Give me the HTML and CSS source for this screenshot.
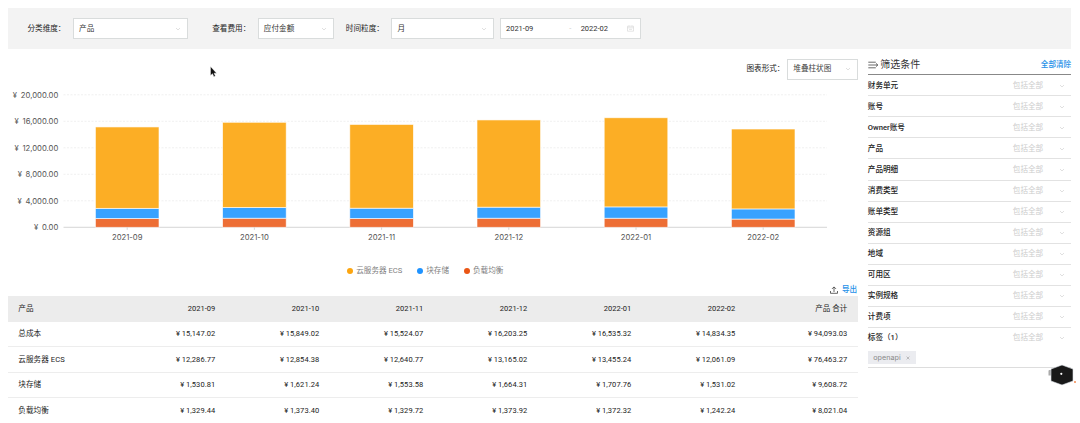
FILE: index.html
```
<!DOCTYPE html>
<html lang="zh-CN">
<head>
<meta charset="utf-8">
<title>费用分析</title>
<link rel="stylesheet" href="styles.css">
</head>
<body>
<svg class="defs" width="0" height="0">
  <symbol id="chev" viewBox="0 0 6 6"><path d="M1 2l2 2 2-2" fill="none" stroke="currentColor" stroke-width=".7"/></symbol>
</svg>
<header class="toolbar">
  <span class="label">分类维度：</span>
  <div class="select dimension"><span>产品</span><svg class="chev"><use href="#chev"/></svg></div>
  <span class="label label-cost">查看费用：</span>
  <div class="select cost"><span>应付金额</span><svg class="chev"><use href="#chev"/></svg></div>
  <span class="label label-time">时间粒度：</span>
  <div class="select period"><span>月</span><svg class="chev"><use href="#chev"/></svg></div>
  <div class="select range"><span>2021-09</span><i>-</i><span class="range-end">2022-02</span>
    <svg class="calendar" viewBox="0 0 7 7"><path d="M.5 1.2h6v5h-6zM.5 2.8h6M2 .5v1M5 .5v1M2 4.4h3" fill="none" stroke="currentColor" stroke-width=".6"/></svg></div>
</header>
<div class="content">
  <main class="main">
    <div class="chart-type"><span class="label">图表形式：</span>
      <div class="select type"><span>堆叠柱状图</span><svg class="chev"><use href="#chev"/></svg></div></div>
    <svg class="chart" id="chart" viewBox="8 84 850 166"></svg>
    <div class="legend">
      <span><b class="dot ecs"></b>云服务器 ECS</span><span><b class="dot disk"></b>块存储</span><span><b class="dot slb"></b>负载均衡</span>
    </div>
    <div class="export">
      <svg viewBox="0 0 8 8"><path d="M4 6V1M2 2.9L4 .9l2 2M.5 5v2.3h7V5" fill="none" stroke="#333" stroke-width=".75"/></svg>
      <a>导出</a>
    </div>
    <table class="table">
      <colgroup><col class="c-name"><col class="c-first"><col><col><col><col><col><col class="c-total"></colgroup>
      <thead><tr><th>产品</th><th>2021-09</th><th>2021-10</th><th>2021-11</th><th>2021-12</th><th>2022-01</th><th>2022-02</th><th>产品 合计</th></tr></thead>
      <tbody>
        <tr><td>总成本</td><td>¥ 15,147.02</td><td>¥ 15,849.02</td><td>¥ 15,524.07</td><td>¥ 16,203.25</td><td>¥ 16,535.32</td><td>¥ 14,834.35</td><td>¥ 94,093.03</td></tr>
        <tr><td>云服务器 ECS</td><td>¥ 12,286.77</td><td>¥ 12,854.38</td><td>¥ 12,640.77</td><td>¥ 13,165.02</td><td>¥ 13,455.24</td><td>¥ 12,061.09</td><td>¥ 76,463.27</td></tr>
        <tr><td>块存储</td><td>¥ 1,530.81</td><td>¥ 1,621.24</td><td>¥ 1,553.58</td><td>¥ 1,664.31</td><td>¥ 1,707.76</td><td>¥ 1,531.02</td><td>¥ 9,608.72</td></tr>
        <tr><td>负载均衡</td><td>¥ 1,329.44</td><td>¥ 1,373.40</td><td>¥ 1,329.72</td><td>¥ 1,373.92</td><td>¥ 1,372.32</td><td>¥ 1,242.24</td><td>¥ 8,021.04</td></tr>
      </tbody>
    </table>
  </main>
  <aside class="filters">
    <div class="filters-head">
      <svg viewBox="0 0 11 8"><path d="M.3 1.2h7.5M.3 4h9.5M.3 6.8h7.5M8 2.4L9.8 4 8 5.6" fill="none" stroke="#444" stroke-width=".8"/></svg>
      <h2>筛选条件</h2><a>全部清除</a>
    </div>
    <div class="filter-row"><span>财务单元</span><em>包括全部</em><svg class="chev"><use href="#chev"/></svg></div>
    <div class="filter-row"><span>账号</span><em>包括全部</em><svg class="chev"><use href="#chev"/></svg></div>
    <div class="filter-row"><span>Owner账号</span><em>包括全部</em><svg class="chev"><use href="#chev"/></svg></div>
    <div class="filter-row"><span>产品</span><em>包括全部</em><svg class="chev"><use href="#chev"/></svg></div>
    <div class="filter-row"><span>产品明细</span><em>包括全部</em><svg class="chev"><use href="#chev"/></svg></div>
    <div class="filter-row"><span>消费类型</span><em>包括全部</em><svg class="chev"><use href="#chev"/></svg></div>
    <div class="filter-row"><span>账单类型</span><em>包括全部</em><svg class="chev"><use href="#chev"/></svg></div>
    <div class="filter-row"><span>资源组</span><em>包括全部</em><svg class="chev"><use href="#chev"/></svg></div>
    <div class="filter-row"><span>地域</span><em>包括全部</em><svg class="chev"><use href="#chev"/></svg></div>
    <div class="filter-row"><span>可用区</span><em>包括全部</em><svg class="chev"><use href="#chev"/></svg></div>
    <div class="filter-row"><span>实例规格</span><em>包括全部</em><svg class="chev"><use href="#chev"/></svg></div>
    <div class="filter-row"><span>计费项</span><em>包括全部</em><svg class="chev"><use href="#chev"/></svg></div>
    <div class="filter-row open"><span>标签（1）</span><em>包括全部</em><svg class="chev"><use href="#chev"/></svg></div>
    <div class="tags"><span class="tag">openapi <svg viewBox="0 0 4 4"><path d="M.6.6l2.8 2.8M3.4.6L.6 3.4" stroke="#888" stroke-width=".5"/></svg></span></div>
  </aside>
</div>
<svg class="cursor" viewBox="0 0 7 12"><path d="M.5.5v9l2-1.8 1.4 3 1.5-.7L4 7.2h2.6z" fill="#111" stroke="#fff" stroke-width=".4"/></svg>
<svg class="assistant" viewBox="0 0 30 22"><path d="M4 6H2.500q-1 0-1 1v4.500H4z" fill="#aaa"/><path d="M15 1l11 4v12l-11 4-11-4V5z" fill="#191919" stroke="#dde3ea" stroke-width=".6"/><circle cx="14.300" cy="9.800" r="1.100" fill="#fff"/><circle cx="28" cy="18" r="1" fill="#f58a50"/></svg>
<script src="chart.js"></script>
</body>
</html>
```
FILE: styles.css
```
* { box-sizing: border-box; }
body { margin: 0; width: 1080px; height: 423px; overflow: hidden; padding: 8.300px 8.800px 0 8.300px; background: #fff; color: #222; font: 7.600px/12px Roboto, "Noto Sans CJK SC", sans-serif; position: relative; }
svg { display: block; }
.defs { position: absolute; }
.toolbar { display: flex; align-items: center; height: 40.500px; padding-left: 19.200px; background: #f3f3f3; }
.label { width: 38px; margin-right: 7.600px; white-space: nowrap; }
.label-cost { margin-left: 24px; }
.label-time { margin-left: 11.500px; }
.select { display: flex; align-items: center; height: 20.700px; padding: 0 6px 0 5px; background: #fff; border: 1px solid #d9dcdc; white-space: nowrap; color: #333; }
.chev { width: 6px; height: 6px; margin-left: auto; color: #d2d2d2; }
.dimension { width: 115.200px; }
.cost { width: 76.500px; }
.period { width: 102.500px; }
.range { width: 141px; margin-left: 6px; font-size: 7.500px; }
.range i { margin-left: 36px; width: 11.300px; font-style: normal; color: #ccc; }
.calendar { width: 7px; height: 7px; margin-left: auto; color: #d4d4d4; }
.content { display: flex; justify-content: space-between; }
.main { width: 849.500px; }
.chart-type { display: flex; align-items: center; justify-content: flex-end; height: 20.700px; margin-top: 10.200px; }
.type { width: 70.500px; margin-left: -4.800px; color: #444; }
.chart { width: 850px; height: 166px; margin: 4.300px 0 0 -.3px; }
.chart text { font-family: Inter, sans-serif; font-size: 7.700px; fill: #555; word-spacing: 1.600px; }
.grid { stroke: #e9e9e9; stroke-width: .7; stroke-dasharray: 2 1.500; }
.axis { stroke: #ccc; stroke-width: .8; }
.legend { display: flex; justify-content: center; gap: 15px; height: 12px; margin-top: 15px; padding-right: 15.500px; color: #808080; }
.legend span { display: flex; align-items: center; }
.dot { width: 6px; height: 6px; margin-right: 3px; border-radius: 50%; }
.ecs { background: #fca510; }
.disk { background: #1f93ff; }
.slb { background: #ea5514; }
.export { display: flex; justify-content: flex-end; align-items: center; height: 12px; margin-top: 7px; gap: 4px; padding-right: .6px; }
.export svg { width: 8px; height: 8px; }
a { color: #2490e8; font-weight: 500; }
.table { width: 849.500px; margin-top: .3px; border-collapse: separate; border-spacing: 0; table-layout: fixed; font-size: 7.500px; }
.c-name { width: 113.500px; }
.c-total { width: 112px; }
th, td { height: 25.500px; padding: 0 10.600px 0 10px; text-align: right; font-weight: 400; border-bottom: 1px solid #ededed; line-height: 12px; white-space: nowrap; }
td { letter-spacing: .05px; }
th { background: #ececec; border-color: #ececec; }
th:first-child, td:first-child { text-align: left; font-size: 7.600px; }
tbody tr:last-child td { border-color: transparent; }
.filters { width: 203.400px; padding-top: 7.500px; }
.filters-head { display: flex; align-items: center; height: 19px; border-bottom: 1px solid #888; }
.filters-head svg { width: 11px; height: 8px; }
.filters-head h2 { flex: 1; margin: 0 0 0 1.500px; font-size: 10px; font-weight: 400; color: #333; }
.filter-row { display: flex; align-items: center; height: 21.060px; padding-top: 1px; border-bottom: 1px solid #e2e2e2; }
.filter-row span { flex: 1; color: #222; font-weight: 500; }
.filter-row em { font-style: normal; color: #ccc; }
.filter-row .chev { margin: 0 6px 0 16px; }
.open { border-color: transparent; }
.tags { height: 19.300px; padding-top: 2.500px; border-bottom: 1px solid #ddd; }
.tag { display: flex; align-items: center; justify-content: space-between; width: 48px; height: 12.700px; padding: 0 6px 0 5.500px; background: #ebecf0; color: #888; font-family: Inter, sans-serif; font-size: 7.200px; }
.tag svg { width: 4px; height: 4px; }
.cursor { position: absolute; left: 209.700px; top: 65.700px; width: 7px; height: 12px; }
.assistant { position: absolute; left: 1046.500px; top: 363.500px; width: 30px; height: 22px; }
```
FILE: chart.js
```
const months = [
  ["2021-09", 12286.77, 1530.81, 1329.44],
  ["2021-10", 12854.38, 1621.24, 1373.40],
  ["2021-11", 12640.77, 1553.58, 1329.72],
  ["2021-12", 13165.02, 1664.31, 1373.92],
  ["2022-01", 13455.24, 1707.76, 1372.32],
  ["2022-02", 12061.09, 1531.02, 1242.24]
];
const base = 227.3, scale = 0.006625;
let out = "";
["0.00", "4,000.00", "8,000.00", "12,000.00", "16,000.00", "20,000.00"].forEach((t, i) => {
  const y = base - i * 4000 * scale;
  out += `<line class="${i ? "grid" : "axis"}" x1="63.5" x2="827" y1="${y}" y2="${y}"/>`;
  out += `<text x="58.300" y="${y + 2.8}" text-anchor="end" xml:space="preserve">¥ ${t}</text>`;
});
months.forEach(([name, ecs, disk, slb], i) => {
  const cx = 127.2 * (i + 1);
  let y = base;
  [[slb, "#ed6e35"], [disk, "#38a2ff"], [ecs, "#fcae25"]].forEach(([v, c]) => {
    const h = v * scale;
    y -= h;
    out += `<rect x="${cx - 31.8}" y="${y}" width="63.6" height="${h}" fill="${c}" stroke="#fff" stroke-opacity=".75" stroke-width=".8"/>`;
  });
  out += `<line class="axis" x1="${cx}" x2="${cx}" y1="${base}" y2="${base + 2.5}"/>`;
  out += `<text x="${cx}" y="240.200" text-anchor="middle">${name}</text>`;
});
document.getElementById("chart").innerHTML = out;
```
